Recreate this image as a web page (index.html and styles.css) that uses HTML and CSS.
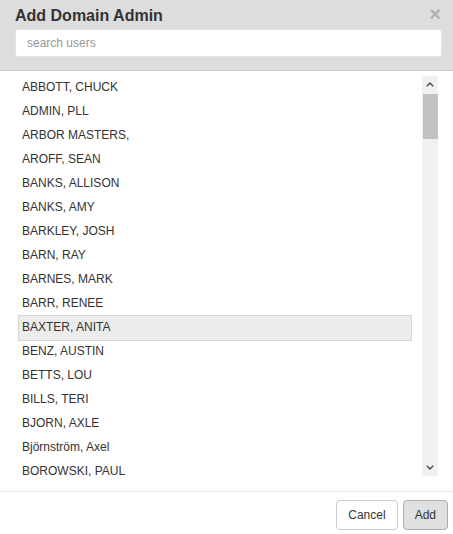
FILE: index.html
```html
<!DOCTYPE html>
<html>
<head>
<meta charset="utf-8">
<link rel="stylesheet" href="styles.css">
</head>
<body>
<div class="modal">
  <div class="modal-header">
    <div class="title-row">
      <h4 class="modal-title">Add Domain Admin</h4>
      <span class="close">×</span>
    </div>
    <input class="search" type="text" placeholder="search users">
  </div>
  <div class="modal-body">
    <ul class="user-list">
      <li class="user">ABBOTT, CHUCK</li>
      <li class="user">ADMIN, PLL</li>
      <li class="user">ARBOR MASTERS,</li>
      <li class="user">AROFF, SEAN</li>
      <li class="user">BANKS, ALLISON</li>
      <li class="user">BANKS, AMY</li>
      <li class="user">BARKLEY, JOSH</li>
      <li class="user">BARN, RAY</li>
      <li class="user">BARNES, MARK</li>
      <li class="user">BARR, RENEE</li>
      <li class="user active">BAXTER, ANITA</li>
      <li class="user">BENZ, AUSTIN</li>
      <li class="user">BETTS, LOU</li>
      <li class="user">BILLS, TERI</li>
      <li class="user">BJORN, AXLE</li>
      <li class="user">Björnström, Axel</li>
      <li class="user">BOROWSKI, PAUL</li>
    </ul>
    <div class="scrollbar">
      <div class="sb-btn">
        <svg width="8" height="5" viewBox="0 0 8 5"><path d="M0.8 4.2 L4 1 L7.2 4.2" fill="none" stroke="#505050" stroke-width="1.5"/></svg>
      </div>
      <div class="sb-thumb"></div>
      <div class="sb-track"></div>
      <div class="sb-btn">
        <svg width="8" height="5" viewBox="0 0 8 5"><path d="M0.8 0.8 L4 4 L7.2 0.8" fill="none" stroke="#505050" stroke-width="1.5"/></svg>
      </div>
    </div>
  </div>
  <div class="modal-footer">
    <button class="btn">Cancel</button>
    <button class="btn btn-primary">Add</button>
  </div>
</div>
</body>
</html>
```

FILE: styles.css
```css
html, body {
  margin: 0;
  padding: 0;
  background: #fff;
}
body {
  font-family: "Liberation Sans", Arial, sans-serif;
  color: #333;
  width: 453px;
  height: 534px;
  overflow: hidden;
}
.modal {
  display: flex;
  flex-direction: column;
}
.modal-header {
  background: #dddddd;
  height: 71px;
  box-sizing: border-box;
  border-bottom: 1px solid #c9c9c9;
  padding: 0 11px 0 15px;
}
.title-row {
  display: flex;
  justify-content: space-between;
  align-items: flex-start;
  height: 29px;
}
.modal-title {
  margin: 0;
  font-size: 16px;
  font-weight: bold;
  line-height: 20px;
  padding-top: 6px;
  color: #333;
}
.close {
  font-size: 20px;
  font-weight: bold;
  line-height: 20px;
  color: #000;
  opacity: 0.2;
  padding-top: 4px;
  margin-right: 1px;
}
.search {
  display: block;
  width: 100%;
  height: 28px;
  box-sizing: border-box;
  border: 1px solid #e4e4e4;
  border-radius: 3px;
  padding: 0 11px;
  font-family: "Liberation Sans", Arial, sans-serif;
  font-size: 12px;
  color: #333;
  background: #fff;
  outline: none;
}
.search::placeholder {
  color: #999;
}
.modal-body {
  display: flex;
  height: 421px;
  box-sizing: border-box;
  padding: 4px 15px 0 18px;
  gap: 10px;
  border-bottom: 1px solid #e5e5e5;
}
.user-list {
  list-style: none;
  margin: 0;
  padding: 0;
  flex: 1;
  overflow: hidden;
}
.user {
  height: 26px;
  box-sizing: border-box;
  border: 1px solid transparent;
  padding: 0 3px;
  line-height: 22px;
  font-size: 12px;
  margin-bottom: -2px;
  white-space: nowrap;
}
.user.active {
  background: #ececec;
  border-color: #d6d6d6;
}
.scrollbar {
  width: 16px;
  height: 400px;
  margin-top: 1px;
  background: #f1f1f1;
  display: flex;
  flex-direction: column;
}
.sb-btn {
  height: 17px;
  display: flex;
  align-items: center;
  justify-content: center;
}
.sb-thumb {
  height: 45px;
  margin: 1px 0 0 1px;
  background: #c1c1c1;
}
.sb-track {
  flex: 1;
}
.modal-footer {
  display: flex;
  justify-content: flex-end;
  gap: 5px;
  padding: 8px 5px 0 0;
}
.btn {
  height: 30px;
  box-sizing: border-box;
  padding: 0 11px;
  border: 1px solid #ccc;
  border-radius: 4px;
  background: #fff;
  color: #333;
  font-family: "Liberation Sans", Arial, sans-serif;
  font-size: 12px;
}
.btn-primary {
  background: #e0e0e0;
  border-color: #adadad;
}
```
